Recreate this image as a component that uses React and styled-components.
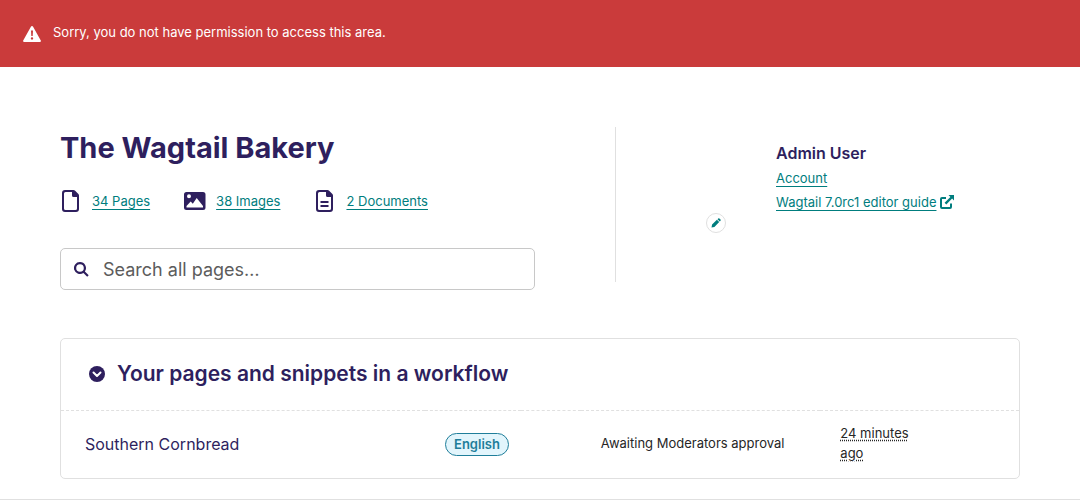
import React from "react";
import styled, { createGlobalStyle } from "styled-components";

const ink = "#2e1f5e";
const teal = "#007d7e";
const line = "#e0e0e0";

const GlobalStyle = createGlobalStyle`
  *, *::before, *::after { box-sizing: border-box; }
  body {
    margin: 0;
    background: #fff;
    color: #262626;
    font-family: Inter, "Liberation Sans", sans-serif;
    font-size: 13px;
    line-height: 20px;
  }
  h1, h2, h3, ul, p { margin: 0; padding: 0; }
`;

const Icon = styled.svg`
  display: block;
  flex: none;
  width: ${(p) => p.$w}px;
  height: ${(p) => p.$h || p.$w}px;
  fill: currentColor;
`;

const Banner = styled.div`
  display: flex;
  gap: 12px;
  padding: 22px 23px 25px;
  background: #ca3b3b;
  color: #fff;

  svg { margin-top: 4px; }
`;

const Main = styled.main`
  padding: 60px 60px 20px;
  border-bottom: 1px solid ${line};
`;

const Header = styled.header`
  display: grid;
  grid-template-columns: 37fr 27fr;
  align-items: start;
  margin-bottom: 48px;
`;

const Summary = styled.section`
  padding-right: 80px;
`;

const Title = styled.h1`
  color: ${ink};
  font-size: 29px;
  font-weight: 700;
  line-height: 42px;
`;

const Stats = styled.ul`
  display: flex;
  gap: 34px;
  margin: 20px 0 35px;
  list-style: none;
  color: ${ink};
`;

const Stat = styled.li`
  display: flex;
  align-items: center;
  gap: 10px;
  height: 24px;
`;

const Link = styled.a`
  color: ${teal};
  text-decoration: underline;
  text-underline-offset: 3px;
  text-decoration-thickness: 1px;
`;

const SearchBox = styled.label`
  display: flex;
  align-items: center;
  gap: 14px;
  height: 42px;
  padding: 0 13px;
  border: 1px solid #c8c8c8;
  border-radius: 5px;
  color: ${ink};
`;

const SearchInput = styled.input`
  flex: 1;
  min-width: 0;
  padding: 2px 0 0;
  border: 0;
  outline: 0;
  background: transparent;
  color: #262626;
  font: inherit;
  font-size: 18px;

  &::placeholder { color: #5c5c5c; opacity: 1; }
`;

const Profile = styled.section`
  display: flex;
  gap: 50px;
  min-height: 155px;
  padding: 15px 0 0 90px;
  border-left: 1px solid ${line};
`;

const EditAvatar = styled.a`
  display: flex;
  flex: none;
  align-items: center;
  justify-content: center;
  width: 20px;
  height: 20px;
  margin-top: 71px;
  border: 1px solid ${line};
  border-radius: 50%;
  color: ${teal};
`;

const ProfileText = styled.div`
  line-height: 24px;
`;

const UserName = styled.h3`
  color: ${ink};
  font-size: 16px;
  font-weight: 600;
  line-height: 22px;
  margin-bottom: 2px;
`;

const GuideLine = styled.div`
  display: flex;
  align-items: center;
  gap: 4px;
  color: ${teal};
`;

const Panel = styled.section`
  border: 1px solid ${line};
  border-radius: 5px;
`;

const PanelHeading = styled.h2`
  padding: 20px 28px 21px;
  color: ${ink};
  font-size: 21px;
  font-weight: 600;
  line-height: 30px;
`;

const Toggle = styled.button`
  display: flex;
  align-items: center;
  gap: 12px;
  padding: 0;
  border: 0;
  background: transparent;
  color: inherit;
  font: inherit;
  cursor: pointer;
`;

const Table = styled.table`
  width: 100%;
  table-layout: fixed;
  border-collapse: separate;
  border-spacing: 0;
`;

const Col = styled.col`
  width: ${(p) => p.$w};
`;

const Cell = styled.td`
  height: 68px;
  padding: 12px 20px 15px;
  border-top: 1px dashed ${line};
  white-space: ${(p) => (p.$wrap ? "normal" : "nowrap")};
`;

const NameCell = styled(Cell)`
  padding: 13px 20px 14px 24px;
`;

const TagCell = styled(Cell)`
  padding: 13px 20px 14px;
`;

const PageLink = styled.a`
  color: ${ink};
  font-size: 16px;
  text-decoration: none;
`;

const Tag = styled.span`
  display: inline-block;
  padding: 0 8px;
  border: 1px solid #1f7e9a;
  border-radius: 12px;
  background: #e2f5fc;
  color: #1f7e9a;
  font-weight: 600;
  line-height: 21px;
`;

const Age = styled.abbr`
  display: block;
  width: 70px;
  text-decoration: underline dotted;
  text-underline-offset: 2px;
`;

const PageOutline = () => (
  <path
    fillRule="evenodd"
    d="M4 0h8.500q.8 0 1.400.6l3.500 3.500q.6.600.6 1.400V19a3 3 0 0 1-3 3H4a3 3 0 0 1-3-3V3a3 3 0 0 1 3-3zM4.500 2A1.500 1.500 0 0 0 3 3.500v15A1.500 1.500 0 0 0 4.500 20h10a1.500 1.500 0 0 0 1.500-1.500V7h-3.500A1.500 1.500 0 0 1 11 5.500V2z"
  />
);

export default function App() {
  return (
    <>
      <GlobalStyle />
      <Banner role="alert">
        <Icon $w={18} $h={16} viewBox="0 0 18 16" aria-hidden="true">
          <path fillRule="evenodd" d="M9 0q.7 0 1.100.7l7.700 13.700q.5 1.600-1 1.600H1.200q-1.500 0-1-1.600L7.900.7Q8.300 0 9 0zM8 4.500l.3 5.500h1.400l.3-5.500zM9 11.200a1.200 1.200 0 1 0 0 2.400 1.200 1.200 0 0 0 0-2.400z" />
        </Icon>
        <p>Sorry, you do not have permission to access this area.</p>
      </Banner>
      <Main>
        <Header>
          <Summary>
            <Title>The Wagtail Bakery</Title>
            <Stats>
              <Stat>
                <Icon $w={22} viewBox="-1 0 22 22" aria-hidden="true"><PageOutline /></Icon>
                <Link href="#pages">34 Pages</Link>
              </Stat>
              <Stat>
                <Icon $w={22} viewBox="0 0 22 22" aria-hidden="true">
                  <path fillRule="evenodd" d="M2.500 2h16.500a2.500 2.500 0 0 1 2.500 2.500v13a2.500 2.500 0 0 1-2.500 2.500H2.500a2.500 2.500 0 0 1-2.500-2.500v-13A2.500 2.500 0 0 1 2.500 2zM5 4.300a2 2 0 1 0 0 4 2 2 0 0 0 0-4zM2.500 17.500h16.500v-1.500L12.700 8 8.800 13.800 6.700 11.500 2.500 16z" />
                </Icon>
                <Link href="#images">38 Images</Link>
              </Stat>
              <Stat>
                <Icon $w={22} viewBox="-1 0 22 22" aria-hidden="true">
                  <PageOutline />
                  <path d="M5.500 11h8v2h-8zM5.500 15h8v2h-8z" />
                </Icon>
                <Link href="#documents">2 Documents</Link>
              </Stat>
            </Stats>
            <SearchBox>
              <Icon $w={15} viewBox="0 0 15 15" aria-hidden="true">
                <path fillRule="evenodd" d="M6 0a6 6 0 0 1 4.900 9.400l3.800 3.800-1.500 1.500-3.800-3.800A6 6 0 1 1 6 0zm0 2.200a3.800 3.800 0 1 0 0 7.600 3.800 3.800 0 0 0 0-7.600z" />
              </Icon>
              <SearchInput type="search" aria-label="Search all pages" placeholder="Search all pages…" />
            </SearchBox>
          </Summary>
          <Profile>
            <EditAvatar href="#avatar" aria-label="Change profile picture">
              <Icon $w={10} viewBox="0 0 10 10" aria-hidden="true">
                <path d="M.5 9.500l.6-2.900 4.800-4.800 2.300 2.300-4.800 4.800zM6.500 1.200l.7-.7q.6-.5 1.200 0l1.100 1.100q.5.600 0 1.200l-.7.7z" />
              </Icon>
            </EditAvatar>
            <ProfileText>
              <UserName>Admin User</UserName>
              <div><Link href="#account">Account</Link></div>
              <GuideLine>
                <Link href="#guide">Wagtail 7.0rc1 editor guide</Link>
                <Icon $w={14} viewBox="0 0 14 14" aria-hidden="true">
                  <path d="M8.500 0H14v5.500l-1.900-1.900-5.800 5.800-1.700-1.700 5.800-5.800zM2 2h4v2H2v8h8V8.500h2V12a2 2 0 0 1-2 2H2a2 2 0 0 1-2-2V4a2 2 0 0 1 2-2z" />
                </Icon>
              </GuideLine>
            </ProfileText>
          </Profile>
        </Header>
        <Panel>
          <PanelHeading>
            <Toggle type="button" aria-expanded="true">
              <Icon $w={16} viewBox="0 0 16 16" aria-hidden="true">
                <circle cx="8" cy="8" r="8" />
                <path d="M4.500 6.500L8 10l3.500-3.500" fill="none" stroke="#fff" strokeWidth="2" strokeLinecap="round" strokeLinejoin="round" />
              </Icon>
              Your pages and snippets in a workflow
            </Toggle>
          </PanelHeading>
          <Table>
            <colgroup>
              <Col $w="38%" />
              <Col $w="10%" />
              <Col $w="60px" />
              <Col $w="25%" />
              <Col $w="auto" />
            </colgroup>
            <tbody>
              <tr>
                <NameCell><PageLink href="#southern-cornbread">Southern Cornbread</PageLink></NameCell>
                <TagCell><Tag>English</Tag></TagCell>
                <Cell />
                <Cell>Awaiting Moderators approval</Cell>
                <Cell $wrap><Age>24 minutes ago</Age></Cell>
              </tr>
            </tbody>
          </Table>
        </Panel>
      </Main>
    </>
  );
}
